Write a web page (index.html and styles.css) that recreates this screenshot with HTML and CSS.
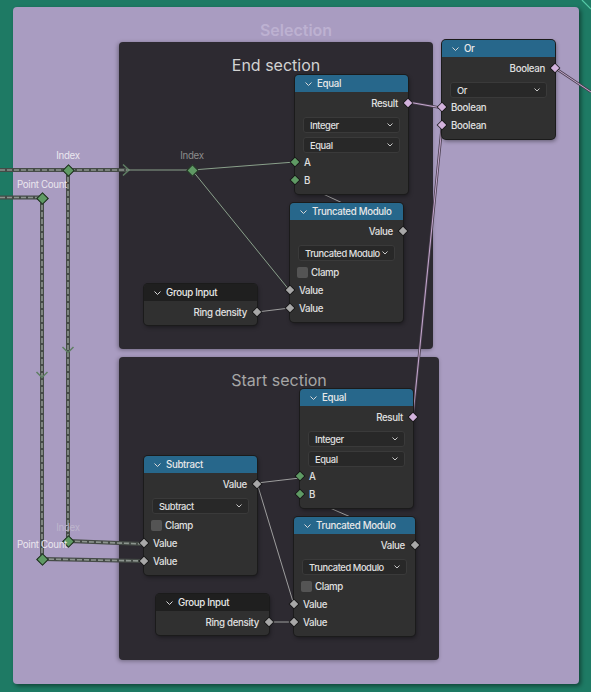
FILE: index.html
```html
<!DOCTYPE html>
<html>
<head>
<meta charset="utf-8">
<link rel="stylesheet" href="styles.css">
</head>
<body>
<div class="canvas">
  <div class="frame frame-selection"><div class="frame-title sel">Selection</div></div>
  <div class="frame frame-end"><div class="frame-title">End section</div></div>
  <div class="frame frame-start"><div class="frame-title dim">Start section</div></div>

  <svg class="wires" width="591" height="692" viewBox="0 0 591 692">
    <path d="M582 0 L591 9" stroke="#55c9a6" stroke-width="1.2" fill="none"/>
    <g class="dash-under">
      <path d="M0 170 H127"/>
      <path d="M0 197.5 H42"/>
      <path d="M42 198 V559"/>
      <path d="M68 170 V541"/>
      <path d="M68 541 L144 544"/>
      <path d="M42 559 L144 561"/>
    </g>
    <g class="dash-over">
      <path d="M0 170 H127"/>
      <path d="M0 197.5 H42"/>
      <path d="M42 198 V559"/>
      <path d="M68 170 V541"/>
      <path d="M68 541 L144 544"/>
      <path d="M42 559 L144 561"/>
    </g>
    <g class="arrow">
      <path d="M123 164.5 L129 170 L123 175.5"/>
      <path d="M62.5 347 L68 352.5 L73.5 347"/>
      <path d="M36.5 372 L42 377.5 L47.5 372"/>
    </g>
    <g class="wire-green">
      <path d="M127 170 L192 170"/>
      <path d="M192 170 L295 162"/>
      <path d="M192 170 L290 291"/>
    </g>
    <g class="wire-grey">
      <path d="M403 231 L295 181"/>
      <path d="M415 545 L300 495"/>
      <path d="M257 312 L290 308"/>
      <path d="M257 483 L300 478"/>
      <path d="M257 483 L294 605"/>
      <path d="M269 622 L294 622"/>
    </g>
    <g class="wire-pink-under">
      <path d="M408 102 L442 108"/>
      <path d="M413 416 L442 126"/>
      <path d="M555 68 L591 92"/>
    </g>
    <g class="wire-pink">
      <path d="M408 102 L442 108"/>
      <path d="M413 416 L442 126"/>
      <path d="M555 68 L591 92"/>
    </g>
  </svg>

  <div class="reroute-label bright" style="left:68px; top:156px">Index</div>
  <div class="reroute" style="left:68px; top:170px"></div>
  <div class="reroute-label bright" style="left:42px; top:185px">Point Count</div>
  <div class="reroute" style="left:42px; top:198px"></div>
  <div class="reroute-label grey" style="left:192px; top:156px">Index</div>
  <div class="reroute" style="left:192px; top:170px"></div>
  <div class="reroute-label faint" style="left:68px; top:528px">Index</div>
  <div class="reroute" style="left:68px; top:541px"></div>
  <div class="reroute-label bright" style="left:42px; top:545px">Point Count</div>
  <div class="reroute" style="left:42px; top:559px"></div>

  <div class="node" style="left:295px; top:75px; width:113px">
    <div class="node-header"><svg class="hchev" width="7" height="4" viewBox="0 0 7 4"><path d="M0.5 0.5 L3.5 3.5 L6.5 0.5"/></svg><span>Equal</span></div>
    <div class="node-body">
      <div class="row out"><span>Result</span><i class="socket pink"></i></div>
      <div class="select"><span>Integer</span><svg class="schev" width="6" height="4" viewBox="0 0 6 4"><path d="M0.5 0.5 L3 3 L5.5 0.5"/></svg></div>
      <div class="select"><span>Equal</span><svg class="schev" width="6" height="4" viewBox="0 0 6 4"><path d="M0.5 0.5 L3 3 L5.5 0.5"/></svg></div>
      <div class="row in"><i class="socket green"></i><span>A</span></div>
      <div class="row in"><i class="socket green"></i><span>B</span></div>
    </div>
  </div>

  <div class="node" style="left:442px; top:40px; width:113px">
    <div class="node-header"><svg class="hchev" width="7" height="4" viewBox="0 0 7 4"><path d="M0.5 0.5 L3.5 3.5 L6.5 0.5"/></svg><span>Or</span></div>
    <div class="node-body">
      <div class="row out"><span>Boolean</span><i class="socket pink"></i></div>
      <div class="select"><span>Or</span><svg class="schev" width="6" height="4" viewBox="0 0 6 4"><path d="M0.5 0.5 L3 3 L5.5 0.5"/></svg></div>
      <div class="row in"><i class="socket pink"></i><span>Boolean</span></div>
      <div class="row in"><i class="socket pink"></i><span>Boolean</span></div>
    </div>
  </div>

  <div class="node" style="left:290px; top:203px; width:113px">
    <div class="node-header"><svg class="hchev" width="7" height="4" viewBox="0 0 7 4"><path d="M0.5 0.5 L3.5 3.5 L6.5 0.5"/></svg><span>Truncated Modulo</span></div>
    <div class="node-body">
      <div class="row out"><span>Value</span><i class="socket grey"></i></div>
      <div class="select"><span>Truncated Modulo</span><svg class="schev" width="6" height="4" viewBox="0 0 6 4"><path d="M0.5 0.5 L3 3 L5.5 0.5"/></svg></div>
      <div class="check-row"><span class="checkbox"></span><span>Clamp</span></div>
      <div class="row in"><i class="socket grey"></i><span>Value</span></div>
      <div class="row in"><i class="socket grey"></i><span>Value</span></div>
    </div>
  </div>

  <div class="node" style="left:144px; top:284px; width:113px">
    <div class="node-header dark"><svg class="hchev" width="7" height="4" viewBox="0 0 7 4"><path d="M0.5 0.5 L3.5 3.5 L6.5 0.5"/></svg><span>Group Input</span></div>
    <div class="node-body short">
      <div class="row out"><span>Ring density</span><i class="socket grey"></i></div>
    </div>
  </div>

  <div class="node" style="left:300px; top:389px; width:113px">
    <div class="node-header"><svg class="hchev" width="7" height="4" viewBox="0 0 7 4"><path d="M0.5 0.5 L3.5 3.5 L6.5 0.5"/></svg><span>Equal</span></div>
    <div class="node-body">
      <div class="row out"><span>Result</span><i class="socket pink"></i></div>
      <div class="select"><span>Integer</span><svg class="schev" width="6" height="4" viewBox="0 0 6 4"><path d="M0.5 0.5 L3 3 L5.5 0.5"/></svg></div>
      <div class="select"><span>Equal</span><svg class="schev" width="6" height="4" viewBox="0 0 6 4"><path d="M0.5 0.5 L3 3 L5.5 0.5"/></svg></div>
      <div class="row in"><i class="socket green"></i><span>A</span></div>
      <div class="row in"><i class="socket green"></i><span>B</span></div>
    </div>
  </div>

  <div class="node" style="left:144px; top:456px; width:113px">
    <div class="node-header"><svg class="hchev" width="7" height="4" viewBox="0 0 7 4"><path d="M0.5 0.5 L3.5 3.5 L6.5 0.5"/></svg><span>Subtract</span></div>
    <div class="node-body">
      <div class="row out"><span>Value</span><i class="socket grey"></i></div>
      <div class="select"><span>Subtract</span><svg class="schev" width="6" height="4" viewBox="0 0 6 4"><path d="M0.5 0.5 L3 3 L5.5 0.5"/></svg></div>
      <div class="check-row"><span class="checkbox"></span><span>Clamp</span></div>
      <div class="row in"><i class="socket grey"></i><span>Value</span></div>
      <div class="row in"><i class="socket grey"></i><span>Value</span></div>
    </div>
  </div>

  <div class="node" style="left:294px; top:517px; width:121px">
    <div class="node-header"><svg class="hchev" width="7" height="4" viewBox="0 0 7 4"><path d="M0.5 0.5 L3.5 3.5 L6.5 0.5"/></svg><span>Truncated Modulo</span></div>
    <div class="node-body">
      <div class="row out"><span>Value</span><i class="socket grey"></i></div>
      <div class="select"><span>Truncated Modulo</span><svg class="schev" width="6" height="4" viewBox="0 0 6 4"><path d="M0.5 0.5 L3 3 L5.5 0.5"/></svg></div>
      <div class="check-row"><span class="checkbox"></span><span>Clamp</span></div>
      <div class="row in"><i class="socket grey"></i><span>Value</span></div>
      <div class="row in"><i class="socket grey"></i><span>Value</span></div>
    </div>
  </div>

  <div class="node" style="left:156px; top:594px; width:113px">
    <div class="node-header dark"><svg class="hchev" width="7" height="4" viewBox="0 0 7 4"><path d="M0.5 0.5 L3.5 3.5 L6.5 0.5"/></svg><span>Group Input</span></div>
    <div class="node-body short">
      <div class="row out"><span>Ring density</span><i class="socket grey"></i></div>
    </div>
  </div>
</div>
</body>
</html>
```
FILE: styles.css
```css
html, body {
  margin: 0;
  padding: 0;
  background: #1e7a64;
  overflow: hidden;
}

.canvas {
  position: relative;
  width: 591px;
  height: 692px;
  overflow: hidden;
  font-family: Inter, "Noto Sans", "DejaVu Sans", sans-serif;
  font-size: 9.7px;
  font-weight: 500;
  letter-spacing: -0.32px;
  color: #e0e0e0;
}

/* frames */
.frame {
  position: absolute;
  border-radius: 4px;
  box-sizing: border-box;
}
.frame-selection {
  left: 13px; top: 7px; width: 566px; height: 677px;
  background: #a99cc1;
  box-shadow: 2px 2px 4px rgba(0, 0, 0, 0.45);
}
.frame-end {
  left: 119px; top: 42px; width: 314px; height: 307px;
  background: #2d2a31;
  box-shadow: -1px 1px 4px rgba(0, 0, 0, 0.35);
}
.frame-start {
  left: 119px; top: 357px; width: 320px; height: 303px;
  background: #2d2a31;
  box-shadow: -1px 1px 4px rgba(0, 0, 0, 0.35);
}
.frame-title {
  text-align: center;
  font-size: 16px;
  font-weight: 400;
  letter-spacing: 0;
  line-height: 20px;
  padding-top: 13px;
  color: #d2d2d2;
}
.frame-title.sel {
  color: #bdb1d1;
  font-weight: 600;
}
.frame-title.dim {
  color: #a6a6a6;
}

/* wires */
.wires {
  position: absolute;
  left: 0; top: 0;
}
.wires path { fill: none; }
.dash-under path { stroke: #454b47; stroke-width: 4; }
.dash-over path { stroke: #8c948e; stroke-width: 1.6; stroke-dasharray: 5 2; }
.arrow path { stroke: #5f7e63; stroke-width: 1.5; }
.wire-green path { stroke: #8aa08b; stroke-width: 1; }
.wire-grey path { stroke: #9d9d9d; stroke-width: 1; }
.wire-pink-under path { stroke: #4a3f4f; stroke-width: 2.6; }
.wire-pink path { stroke: #c6a9cf; stroke-width: 1; }

/* reroutes */
.reroute {
  position: absolute;
  width: 7px; height: 7px;
  margin-left: -4.5px; margin-top: -4.5px;
  background: #5f9a64;
  border: 1px solid #1c261d;
  transform: rotate(45deg);
}
.reroute-label {
  position: absolute;
  transform: translate(-50%, -50%);
  white-space: nowrap;
  line-height: 12px;
  font-weight: 400;
}
.reroute-label.bright { color: #e9e6ee; }
.reroute-label.grey { color: #8c8c8c; }
.reroute-label.faint { color: #bdb5cc; }

/* nodes */
.node {
  position: absolute;
  background: #303030;
  border-radius: 4px;
  box-shadow: 0 0 0 1px #1b1b1b, 1px 2px 4px rgba(0, 0, 0, 0.45);
}
.node-header {
  height: 17px;
  background: #27678b;
  border-radius: 4px 4px 0 0;
  display: flex;
  align-items: center;
  gap: 5px;
  padding-left: 10px;
  color: #e8e8e8;
  white-space: nowrap;
}
.node-header.dark { background: #1f1f1f; }
.hchev path { stroke: #d8d8d8; stroke-width: 1; fill: none; }

.node-body {
  padding: 2px 0 5px;
}
.node-body.short { padding-bottom: 4px; }

.row {
  position: relative;
  height: 18px;
  display: flex;
  align-items: center;
  white-space: nowrap;
}
.row.out { justify-content: flex-end; padding-right: 10px; }
.row.in { padding-left: 9px; }

.socket {
  position: absolute;
  top: 50%;
  width: 6px; height: 6px;
  margin-top: -3px;
  box-shadow: 0 0 0 0.8px rgba(15, 15, 15, 0.9);
  transform: rotate(45deg);
}
.row.out .socket { right: -3px; }
.row.in .socket { left: -3px; }
.socket.pink { background: #d2b2dc; }
.socket.green { background: #5f9a64; }
.socket.grey { background: #a8a8a8; }

.select {
  margin: 5px 8px 0;
  height: 16px;
  box-sizing: border-box;
  background: #282828;
  border: 1px solid #3a3a3a;
  border-radius: 3px;
  display: flex;
  align-items: center;
  justify-content: space-between;
  padding: 0 6px 0 6px;
  white-space: nowrap;
  font-size: 9.3px;
  letter-spacing: -0.4px;
}
.select + .select { margin-top: 4px; }
.schev path { stroke: #c8c8c8; stroke-width: 1; fill: none; }

.check-row {
  height: 18px;
  margin-top: 2px;
  display: flex;
  align-items: center;
  gap: 3px;
  padding-left: 7px;
}
.checkbox {
  width: 11px; height: 11px;
  background: #545454;
  border-radius: 2px;
}
```
